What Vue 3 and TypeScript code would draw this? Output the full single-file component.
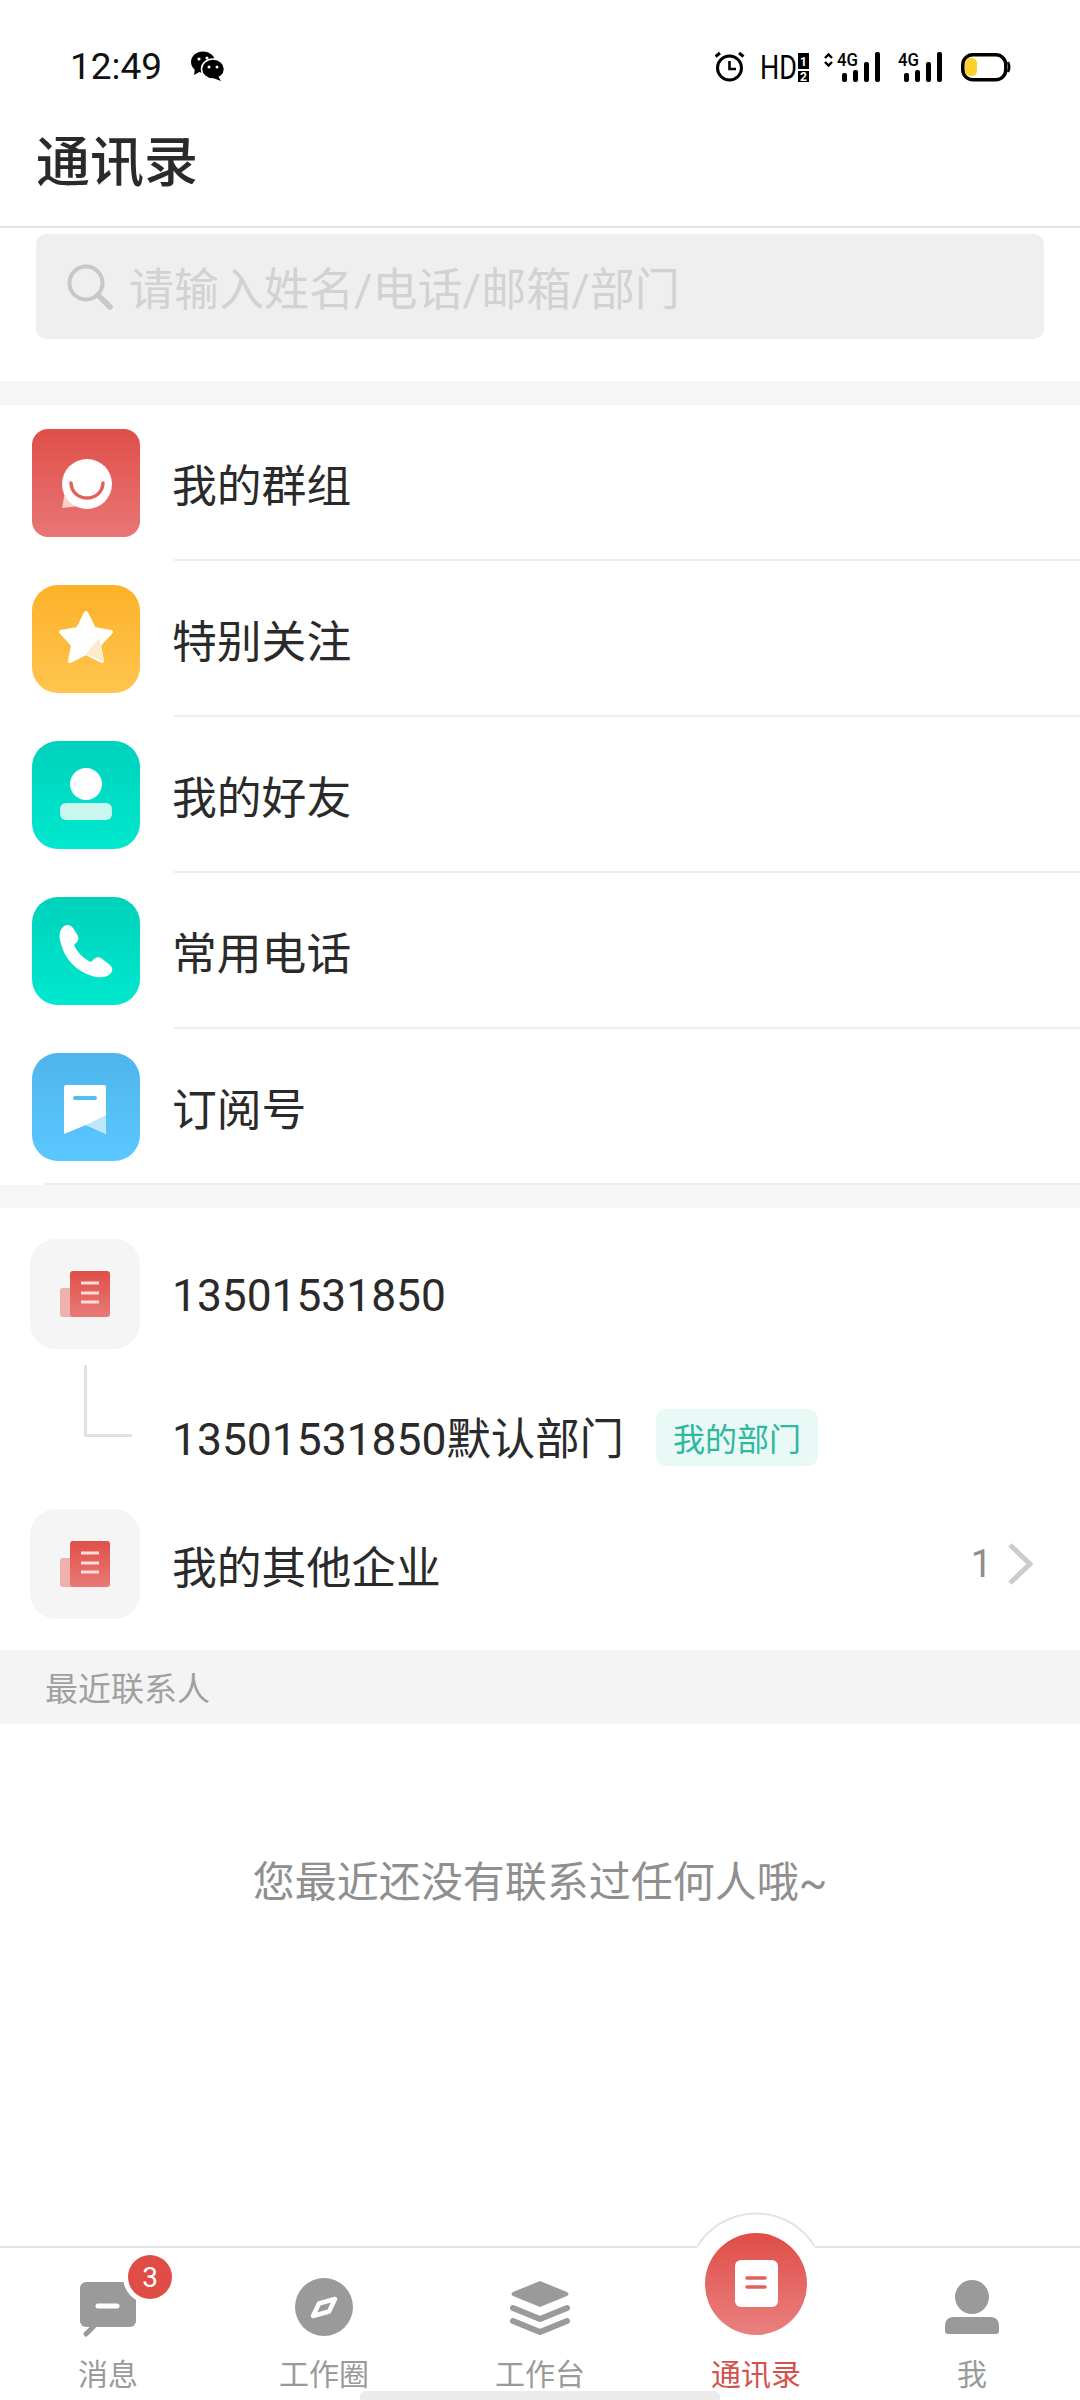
<script setup lang="ts">
const rows = [
  { key: 'group', label: '我的群组', cls: 'red' },
  { key: 'star', label: '特别关注', cls: 'orange' },
  { key: 'friend', label: '我的好友', cls: 'teal' },
  { key: 'phone', label: '常用电话', cls: 'teal2' },
  { key: 'sub', label: '订阅号', cls: 'blue' },
]
const tabs = [
  { key: 'msg', label: '消息' },
  { key: 'circle', label: '工作圈' },
  { key: 'desk', label: '工作台' },
  { key: 'contact', label: '通讯录' },
  { key: 'me', label: '我' },
]
</script>

<template>
  <div class="page">
    <div class="status">
      <span class="time">12:49</span>
      <svg class="wechat" width="34" height="30" viewBox="0 0 34 30">
        <ellipse cx="13" cy="11" rx="12" ry="10.5" fill="#000" />
        <path d="M5 17 L4 24 L11 20 Z" fill="#000" />
        <ellipse cx="23" cy="18" rx="11.5" ry="10" fill="#000" stroke="#fff" stroke-width="1.5" />
        <path d="M28 25 L31 30 L23 27 Z" fill="#000" />
        <circle cx="9" cy="8" r="1.6" fill="#fff" /><circle cx="17" cy="7" r="1.6" fill="#fff" />
        <circle cx="19" cy="16" r="1.5" fill="#fff" /><circle cx="27" cy="16" r="1.5" fill="#fff" />
      </svg>
      <svg class="sys" width="297" height="50" viewBox="0 0 297 50">
        <circle cx="14.5" cy="27" r="12" fill="none" stroke="#000" stroke-width="3" />
        <path d="M14.5 20 V28 H21" fill="none" stroke="#000" stroke-width="2.6" />
        <path d="M0.5 15.5 L5 12 M24 12 L28.5 15.5" stroke="#000" stroke-width="3" />
        <text x="45" y="38" class="st hd" textLength="37" lengthAdjust="spacingAndGlyphs">HD</text>
        <rect x="83" y="12" width="11" height="16" fill="#000" />
        <rect x="83" y="30" width="11" height="11" fill="#000" />
        <text x="88.5" y="24.500" class="st mini" text-anchor="middle">1</text>
        <text x="88.5" y="40" class="st mini" text-anchor="middle">2</text>
        <path d="M110 17 L113.5 13.5 L117 17 M110 21 L113.5 24.5 L117 21" fill="none" stroke="#000" stroke-width="2.4" />
        <text x="122" y="25" class="st fg" textLength="21" lengthAdjust="spacingAndGlyphs">4G</text>
        <rect x="127" y="32" width="5" height="9" rx="2" /><rect x="138" y="29" width="5" height="12" rx="2" />
        <rect x="149" y="21" width="5" height="20" rx="2" /><rect x="160" y="11" width="5" height="30" rx="2" />
        <text x="183" y="25" class="st fg" textLength="21" lengthAdjust="spacingAndGlyphs">4G</text>
        <rect x="189" y="32" width="5" height="9" rx="2" /><rect x="200" y="29" width="5" height="12" rx="2" />
        <rect x="211" y="21" width="5" height="20" rx="2" /><rect x="222" y="11" width="5" height="30" rx="2" />
        <rect x="247.8" y="13.8" width="43" height="25" rx="10" fill="none" stroke="#000" stroke-width="3.5" />
        <path d="M293 21 Q295.500 26 293 31" fill="none" stroke="#000" stroke-width="2.500" />
        <rect x="250" y="17" width="12" height="18" rx="5" fill="#fcd02f" />
      </svg>
    </div>

    <div class="titlebar"><h1>通讯录</h1></div>

    <div class="search-wrap">
      <div class="search">
        <svg class="search-ico" width="46" height="46" viewBox="0 0 46 46">
          <circle cx="19" cy="19" r="16.500" fill="none" stroke="#c8c8c8" stroke-width="4" />
          <path d="M31 31 L43 43" stroke="#c8c8c8" stroke-width="5.500" stroke-linecap="round" />
        </svg>
        <span>请输入姓名/电话/邮箱/部门</span>
      </div>
    </div>

    <div class="gap first-gap"></div>

    <div v-for="(r, i) in rows" :key="r.key" class="row" :class="{ last: i === rows.length - 1 }">
      <div class="ico" :class="r.cls">
        <svg width="108" height="108" viewBox="0 0 108 108">
          <template v-if="r.key === 'group'">
            <path d="M33 63 L30 79 L48 77 Z" fill="#f9d0ce" />
            <circle cx="55" cy="55" r="25" fill="#fff" />
            <path d="M39 54 C40 74 70 74 71 54" fill="none" stroke="#e4605b" stroke-width="3.500" stroke-linecap="round" />
          </template>
          <template v-else-if="r.key === 'star'">
            <path d="M54 28 L62 44 L79 47 L67 60 L70 76 L54 68 L38 76 L41 60 L29 47 L46 44 Z" fill="#fff" stroke="#fff" stroke-width="4" stroke-linejoin="round" />
            <path d="M54 69 L67 53 L72 77 Z" fill="#fdeacb" />
          </template>
          <template v-else-if="r.key === 'friend'">
            <circle cx="54" cy="43" r="16" fill="#fff" />
            <rect x="28" y="62" width="52" height="17" rx="6" fill="#c9f7ef" />
          </template>
          <template v-else-if="r.key === 'phone'">
            <path d="M30 31 C33 27 38 27 41 31 L46 39 C47 42 46 44 44 46 L42 48 C45 55 52 62 59 65 L62 62 C64 60 67 60 69 61 L78 68 C81 71 81 74 78 77 C74 81 67 81 60 79 C44 74 33 62 29 47 C27 40 27 35 30 31 Z" fill="#fff" />
          </template>
          <template v-else>
            <path d="M34 32 H72 Q74 32 74 34 V81 L54 72 L32 81 V34 Q32 32 34 32 Z" fill="#fff" />
            <path d="M54 72 L74 62 V81 Z" fill="#bde6fb" />
            <path d="M43 45 H63" stroke="#54beee" stroke-width="4" stroke-linecap="round" />
          </template>
        </svg>
      </div>
      <div class="row-label">{{ r.label }}</div>
    </div>

    <div class="gap second-gap"></div>

    <div class="org">
      <div class="org-ico">
        <svg width="110" height="110" viewBox="0 0 110 110">
          <defs>
            <linearGradient id="docA" x1="0" y1="0" x2="0" y2="1"><stop offset="0" stop-color="#e04f48" /><stop offset="1" stop-color="#e97a77" /></linearGradient>
          </defs>
          <rect x="30" y="49" width="14" height="29" rx="3" fill="#edb1ae" />
          <rect x="40" y="32" width="40" height="46" rx="3" fill="url(#docA)" />
          <path d="M51 44 H69 M51 54 H69 M51 63 H69" stroke="#fbdcdc" stroke-width="3" />
        </svg>
      </div>
      <div class="org-text digits">13501531850</div>
    </div>

    <div class="dept">
      <i class="tree"></i>
      <span class="org-text dept-name">13501531850默认部门</span>
      <span class="tag">我的部门</span>
    </div>

    <div class="org">
      <div class="org-ico">
        <svg width="110" height="110" viewBox="0 0 110 110">
          <rect x="30" y="49" width="14" height="29" rx="3" fill="#edb1ae" />
          <rect x="40" y="32" width="40" height="46" rx="3" fill="url(#docA)" />
          <path d="M51 44 H69 M51 54 H69 M51 63 H69" stroke="#fbdcdc" stroke-width="3" />
        </svg>
      </div>
      <div class="org-text">我的其他企业</div>
      <span class="count">1</span>
      <svg class="chev" width="26" height="44" viewBox="0 0 26 44">
        <path d="M3 3 L23 22 L3 41" fill="none" stroke="#cccccc" stroke-width="5" />
      </svg>
    </div>

    <div class="recent">最近联系人</div>
    <div class="empty">您最近还没有联系过任何人哦~</div>

    <nav class="tabs">
      <div v-for="t in tabs" :key="t.key" class="tab" :class="{ on: t.key === 'contact' }">
        <svg class="tab-ico" width="120" height="108" viewBox="0 0 120 108">
          <template v-if="t.key === 'msg'">
            <rect x="32" y="34" width="56" height="45" rx="6" fill="#9a9a9a" />
            <path d="M46 78 L38 86" stroke="#9a9a9a" stroke-width="5" stroke-linecap="round" />
            <path d="M50 58 H69" stroke="#fff" stroke-width="5" stroke-linecap="round" />
            <circle cx="102" cy="29" r="27" fill="#fff" />
            <circle cx="102" cy="29" r="22" fill="#e04d47" />
            <text x="102" y="39" class="badge" text-anchor="middle">3</text>
          </template>
          <template v-else-if="t.key === 'circle'">
            <circle cx="60" cy="59" r="29" fill="#9a9a9a" />
            <path d="M71 51 L55 55.500 L49 68 L65 63.500 Z" fill="none" stroke="#fff" stroke-width="4.500" stroke-linejoin="round" />
          </template>
          <template v-else-if="t.key === 'desk'">
            <path d="M60 33 L87 44 Q90 46 87 48 L60 59 L33 48 Q30 46 33 44 Z" fill="#9a9a9a" />
            <path d="M33 60 L60 71 L87 60 M33 73 L60 84 L87 73" fill="none" stroke="#9a9a9a" stroke-width="6" stroke-linecap="round" stroke-linejoin="round" />
          </template>
          <template v-else-if="t.key === 'contact'">
            <defs>
              <linearGradient id="tabG" x1="0" y1="0" x2="0" y2="1"><stop offset="0" stop-color="#e04d47" /><stop offset="1" stop-color="#e98180" /></linearGradient>
            </defs>
            <path d="M1.500 1 L1.500 -2 A69 69 0 0 1 118.500 -2 L118.500 1 Z" fill="#fff" />
            <path d="M1.500 -2 A69 69 0 0 1 118.500 -2" fill="none" stroke="#e3e3e3" stroke-width="2" />
            <circle cx="60" cy="36" r="51" fill="url(#tabG)" />
            <rect x="39" y="12" width="43" height="47" rx="6" fill="#fff" />
            <path d="M51 30 H69 M51 39 H69" stroke="#e5605c" stroke-width="3.500" stroke-linecap="round" />
          </template>
          <template v-else>
            <circle cx="60" cy="49" r="17" fill="#9a9a9a" />
            <path d="M42 69 H78 Q87 69 87 78 V83 Q87 86 84 86 H36 Q33 86 33 83 V78 Q33 69 42 69 Z" fill="#9a9a9a" />
          </template>
        </svg>
        <span class="tab-label">{{ t.label }}</span>
      </div>
      <i class="home-bar"></i>
    </nav>
  </div>
</template>

<style>
html, body { margin: 0; background: #fff; }
</style>

<style scoped>
.page {
  width: 1080px;
  height: 2400px;
  display: flex;
  flex-direction: column;
  background: #fff;
  overflow: hidden;
  font-family: Roboto, "Noto Sans CJK SC", sans-serif;
  color: #2a2a2a;
}
.status {
  height: 52px;
  margin-top: 40px;
  display: flex;
  align-items: center;
  padding: 0 68px 0 70px;
}
.time { font-size: 37px; color: #111; }
.wechat { margin-left: 28px; }
.sys { margin-left: auto; }
.sys rect:not([fill]) { fill: #000; }
.st { font-family: Roboto, sans-serif; fill: #000; }
.hd { font-size: 34px; }
.mini { font-size: 12px; font-weight: 700; fill: #fff; }
.fg { font-size: 18px; font-weight: 500; }
.titlebar {
  border-bottom: 2px solid #e3e3e3;
  display: flex;
  align-items: center;
  padding: 0 36px 2px;
  height: 132px;
}
h1 { margin: 0; font-size: 54px; font-weight: 500; color: #2a2a2a; }
.search-wrap { padding: 6px 36px 42px 36px; }
.search {
  height: 105px;
  border-radius: 10px;
  background: #efefef;
  display: flex;
  align-items: center;
  padding-left: 31px;
  font-size: 45px;
  color: #d2d2d2;
}
.search-ico { margin-right: 16px; flex: none; }
.gap { background: #f6f6f6; }
.first-gap { height: 24px; }
.second-gap { height: 23px; }
.row {
  height: 156px;
  box-sizing: border-box;
  display: flex;
  align-items: center;
  padding-left: 32px;
  position: relative;
}
.ico {
  width: 108px;
  height: 108px;
  border-radius: 26px;
  flex: none;
}
.ico svg { display: block; }
.red { background: linear-gradient(#e04f48, #e87676); border-radius: 16px; }
.orange { background: linear-gradient(#fdb128, #ffc54f); }
.teal { background: linear-gradient(#00d1bb, #00e8cf); }
.teal2 { background: linear-gradient(#00d1bb, #00e8cf); }
.blue { background: linear-gradient(#4eb5ec, #5ac8ff); }
.row-label {
  align-self: stretch;
  flex: 1;
  margin-left: 34px;
  font-size: 44.8px;
  display: flex;
  align-items: center;
  border-bottom: 2px solid #eeeeee;
  position: relative;
  text-indent: -2px;
}
.row.last .row-label { margin-left: -95px; padding-left: 127px; text-indent: 0; }
.org {
  height: 172px;
  display: flex;
  align-items: center;
  padding: 0 47px 0 30px;
}
.org-ico {
  width: 110px;
  height: 110px;
  border-radius: 26px;
  background: #f5f5f5;
  flex: none;
  margin-right: 32px;
}
.org-ico svg { display: block; }
.org-text { font-size: 44.8px; color: #2a2a2a; flex: 1; }
.digits { padding-top: 4px; font-size: 44.3px; }
.dept {
  position: relative;
  height: 98px;
  box-sizing: border-box;
  padding: 16px 0 0 172px;
  display: flex;
  align-items: center;
}
.dept .dept-name { flex: none; margin-bottom: 3px; font-size: 44.4px; }
.tree {
  position: absolute;
  left: 84px;
  top: -15px;
  width: 48px;
  height: 72px;
  box-sizing: border-box;
  border-left: 3px solid #e2e2e2;
  border-bottom: 3px solid #e2e2e2;
}
.tag {
  margin-left: 32px;
  width: 162px;
  height: 57px;
  border-radius: 10px;
  background: #e9f9f6;
  color: #2fb8a0;
  font-size: 32px;
  display: flex;
  align-items: center;
  justify-content: center;
}
.count { font-size: 38px; color: #8e8e8e; margin-right: 15px; }
.chev { flex: none; }
.recent {
  height: 74px;
  background: #f4f4f4;
  display: flex;
  align-items: center;
  padding-left: 45px;
  font-size: 33px;
  color: #a0a0a0;
}
.empty {
  flex: 1;
  padding-top: 135px;
  text-align: center;
  font-size: 42px;
  line-height: 48px;
  color: #8f8f8f;
}
.tabs {
  position: relative;
  height: 154px;
  box-sizing: border-box;
  border-top: 2px solid #e3e3e3;
  display: flex;
}
.tab {
  flex: 1;
  display: flex;
  flex-direction: column;
  align-items: center;
}
.tab-ico { display: block; overflow: visible; flex: none; margin-bottom: 1px; }
.tab-label {
  font-size: 30px;
  line-height: 36px;
  color: #9a9a9a;
}
.tab.on .tab-label { color: #d4524e; }
.badge { font-family: Roboto, sans-serif; font-size: 28px; fill: #fff; }
.home-bar {
  position: absolute;
  left: 360px;
  bottom: 0;
  width: 360px;
  height: 9px;
  border-radius: 6px 6px 0 0;
  background: #ebebeb;
}
</style>
